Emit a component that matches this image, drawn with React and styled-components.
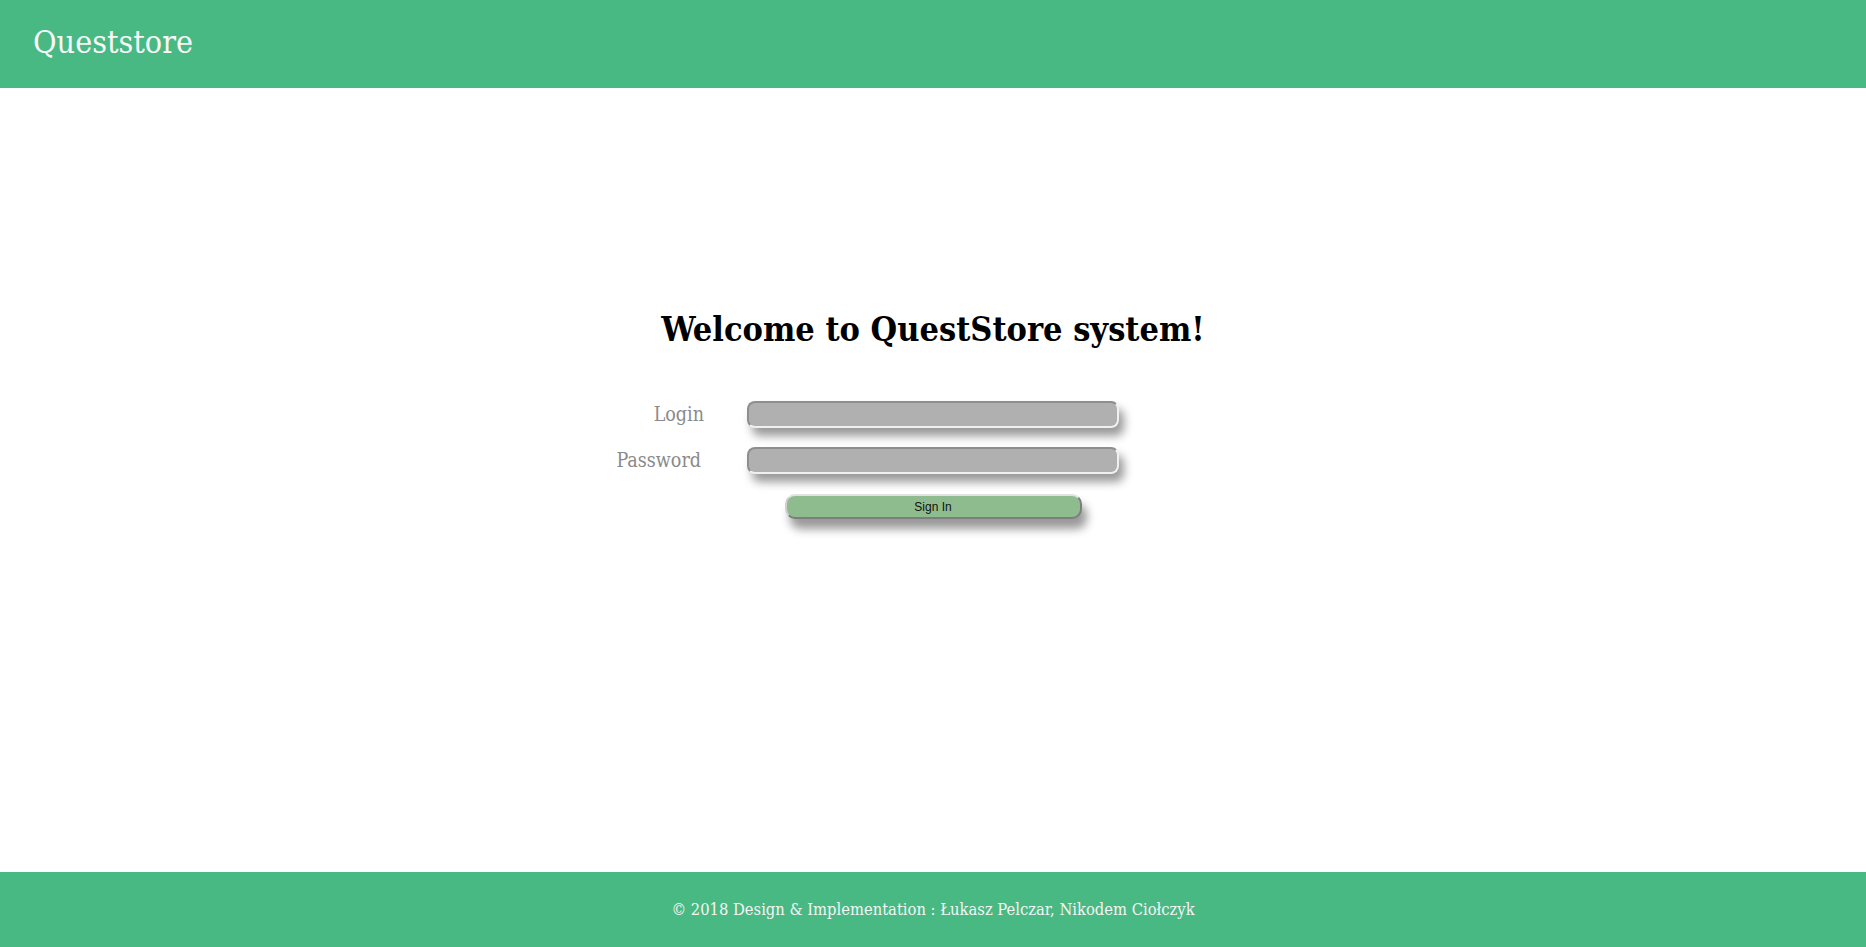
import React from 'react';
import styled, { createGlobalStyle } from 'styled-components';

const GlobalStyle = createGlobalStyle`
  html, body {
    margin: 0;
    padding: 0;
    height: 100%;
    background: #ffffff;
  }
  #root {
    height: 100%;
  }
`;

const Page = styled.div`
  display: flex;
  flex-direction: column;
  min-height: 100vh;
  font-family: 'DejaVu Serif', 'Liberation Serif', serif;
  font-stretch: condensed;
`;

const Header = styled.header`
  height: 88px;
  background-color: #49b983;
  display: flex;
  align-items: center;
  padding: 0 33px;
  box-sizing: border-box;
`;

const Brand = styled.h1`
  margin: 0;
  font-size: 32px;
  font-weight: normal;
  color: #f7f7f7;
  padding-bottom: 4px;
`;

const Main = styled.main`
  flex: 1;
  display: flex;
  flex-direction: column;
  padding-top: 221px;
`;

const Title = styled.h2`
  margin: 0 0 52px;
  text-align: center;
  font-size: 34px;
  font-weight: bold;
  color: #000;
`;

const Form = styled.form`
  display: grid;
  grid-template-columns: 1fr 372px 1fr;
  row-gap: 19px;
  align-items: center;
`;

const Label = styled.label`
  grid-column: 1;
  text-align: right;
  padding-right: ${(p) => p.$gap}px;
  font-size: 19.5px;
  color: #8a8a8a;
`;

const Input = styled.input`
  grid-column: 2;
  height: 27px;
  box-sizing: border-box;
  background: #b0b0b0;
  border: 2px solid;
  border-color: #8e8e8e #f0f0f0 #f0f0f0 #8e8e8e;
  border-radius: 8px;
  box-shadow: 5px 8px 10px rgba(0, 0, 0, 0.4);
  outline: none;
`;

const Button = styled.button`
  grid-column: 2;
  justify-self: center;
  width: 297px;
  height: 25px;
  margin-top: 1px;
  box-sizing: border-box;
  background: #8fbc8f;
  border: 2px solid;
  border-color: #e2e2e2 #7d7d7d #7d7d7d #d0d0d0;
  border-radius: 10px;
  box-shadow: 5px 10px 10px rgba(0, 0, 0, 0.4);
  font-family: 'Liberation Sans', Arial, sans-serif;
  font-size: 12px;
  color: #111;
  cursor: pointer;
`;

const Footer = styled.footer`
  height: 75px;
  background-color: #49b983;
  display: flex;
  align-items: center;
  justify-content: center;
  color: #f4f4f4;
  font-size: 16.4px;
`;

export default function App() {
  return (
    <>
      <GlobalStyle />
      <Page>
        <Header>
          <Brand>Queststore</Brand>
        </Header>
        <Main>
          <Title>Welcome to QuestStore system!</Title>
          <Form onSubmit={(e) => e.preventDefault()}>
            <Label htmlFor="login" $gap={43}>Login</Label>
            <Input id="login" type="text" />
            <Label htmlFor="password" $gap={46}>Password</Label>
            <Input id="password" type="password" />
            <Button type="submit">Sign In</Button>
          </Form>
        </Main>
        <Footer>
          © 2018 Design &amp; Implementation : Łukasz Pelczar, Nikodem Ciołczyk
        </Footer>
      </Page>
    </>
  );
}
